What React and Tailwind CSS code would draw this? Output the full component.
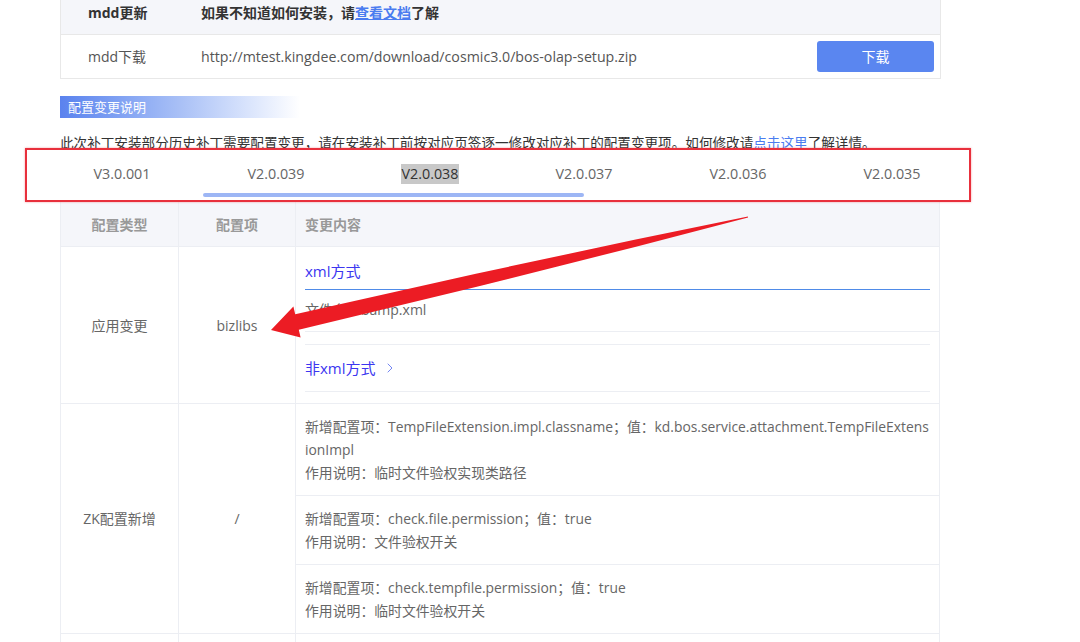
import { ChevronRight } from "lucide-react";

const versions = ["V3.0.001", "V2.0.039", "V2.0.038", "V2.0.037", "V2.0.036", "V2.0.035"];

const zkItems = [
  {
    lines: [
      "新增配置项：TempFileExtension.impl.classname；值：kd.bos.service.attachment.TempFileExtens",
      "ionImpl",
      "作用说明：临时文件验权实现类路径",
    ],
  },
  { lines: ["新增配置项：check.file.permission；值：true", "作用说明：文件验权开关"] },
  { lines: ["新增配置项：check.tempfile.permission；值：true", "作用说明：临时文件验权开关"] },
];

function Arrow() {
  // red annotation arrow drawn over the table
  const pts = [
    [271, 330],
    [293.4, 306.4],
    [295.2, 314.2],
    [475.9, 273.7],
    [634.5, 239.8],
    [747.9, 216.5],
    [748.1, 217.5],
    [636.0, 246.7],
    [478.9, 286.3],
    [298.8, 329.8],
    [300.6, 337.6],
  ];
  return (
    <svg className="absolute left-0 top-0 pointer-events-none" width="1080" height="642">
      <polygon points={pts.map((p) => p.join(",")).join(" ")} fill="#ec1c24" />
    </svg>
  );
}

export default function App() {
  return (
    <div className="relative w-[1080px] h-[642px] overflow-hidden bg-white font-['Open_Sans','Noto_Sans_CJK_SC',sans-serif] text-[14px]">
      <div className="ml-[60px] w-[881px] -mt-[9px]">

        {/* mdd table */}
        <div className="border-x border-[#e8e8e8]">
          <div className="flex items-center h-[44px] bg-[#f5f6fa] border-b border-[#e8e8e8] font-bold text-[#333]">
            <div className="w-[140px] pl-[27px]">mdd更新</div>
            <div>
              如果不知道如何安装，请<span className="text-[#4a7cf0] underline">查看文档</span>了解
            </div>
          </div>
          <div className="flex items-center h-[44px] border-b border-[#e8e8e8] text-[#555]">
            <div className="w-[140px] pl-[27px]">mdd下载</div>
            <div className="text-[14.2px]">http://mtest.kingdee.com/download/cosmic3.0/bos-olap-setup.zip</div>
            <button className="ml-auto mr-[6px] w-[117px] h-[31px] rounded-[3px] bg-[#5a86f0] text-white text-[14px]">
              下载
            </button>
          </div>
        </div>

        {/* section title */}
        <div className="mt-[17px] h-[22px] w-[240px] pl-[8px] leading-[22px] text-[13px] text-white bg-linear-to-r from-[#5a82ee] via-[#a9c0f6] to-white">
          配置变更说明
        </div>

        <p className="mt-[15px] leading-[20px] text-[13.6px] text-[#333] whitespace-nowrap">
          此次补丁安装部分历史补丁需要配置变更，请在安装补丁前按对应页签逐一修改对应补丁的配置变更项。如何修改请<span className="text-[#4a7cf0]">点击这里</span>了解详情。
        </p>

        {/* version tabs (red annotation box) */}
        <div className="relative -mt-[5px] -ml-[35px] w-[946px] h-[54px] bg-white border-2 border-[#e8303c] shadow-[0_0_2px_rgba(232,48,60,0.45)]">
          <div className="flex pl-[18px] pt-[14px]">
            {versions.map((v) => (
              <div key={v} className="w-[155px] flex justify-center leading-[20px] text-[14.3px]">
                {v === "V2.0.038" ? (
                  <span className="bg-[#c8c8c8] text-[#333] px-[1px]">{v}</span>
                ) : (
                  <span className="text-[#666]">{v}</span>
                )}
              </div>
            ))}
          </div>
          <div className="mt-[9px] ml-[176px] w-[381px] h-[4px] rounded-full bg-[#9db6f5]" />
        </div>

        {/* config table */}
        <div className="w-[880px] border-x border-[#eceef3] text-[#666]">
          <div className="flex h-[45px] bg-[#f5f6fa] border-b border-[#eceef3] font-semibold text-[#999]">
            <div className="w-[118px] border-r border-[#eceef3] flex items-center justify-center">配置类型</div>
            <div className="w-[117px] border-r border-[#eceef3] flex items-center justify-center">配置项</div>
            <div className="flex-1 flex items-center pl-[9px]">变更内容</div>
          </div>

          <div className="flex h-[157px] border-b border-[#eceef3]">
            <div className="w-[118px] border-r border-[#eceef3] flex items-center justify-center">应用变更</div>
            <div className="w-[117px] border-r border-[#eceef3] flex items-center justify-center">bizlibs</div>
            <div className="flex-1">
              <div className="ml-[9px] border-b border-[#eceef3]">
                <div className="mr-[9px] pt-[12px] pb-[6px] leading-[24px] text-[15px] text-[#3c36f0] border-b border-[#4f8be8]">
                  xml方式
                </div>
                <div className="pt-[8px] pb-[10px] leading-[23px]">文件名：bamp.xml</div>
              </div>
              <div className="mt-[12px] mx-[9px] h-[48px] border-y border-[#eceef3] flex items-center gap-[6px] text-[15px] text-[#3c36f0]">
                非xml方式
                <ChevronRight size={16} strokeWidth={1.5} className="text-[#7486f3]" />
              </div>
            </div>
          </div>

          <div className="flex border-b border-[#eceef3]">
            <div className="w-[118px] border-r border-[#eceef3] flex items-center justify-center">ZK配置新增</div>
            <div className="w-[117px] border-r border-[#eceef3] flex items-center justify-center">/</div>
            <div className="flex-1 text-[13.85px]">
              {zkItems.map((item, i) => (
                <div key={i} className="py-[11px] pl-[9px] leading-[23px] border-b border-[#eceef3] last:border-b-0 whitespace-nowrap">
                  {item.lines.map((l) => (
                    <div key={l}>{l}</div>
                  ))}
                </div>
              ))}
            </div>
          </div>

          <div className="flex h-[40px]">
            <div className="w-[118px] border-r border-[#eceef3]" />
            <div className="w-[117px] border-r border-[#eceef3]" />
            <div className="flex-1" />
          </div>
        </div>
      </div>

      <Arrow />
    </div>
  );
}
